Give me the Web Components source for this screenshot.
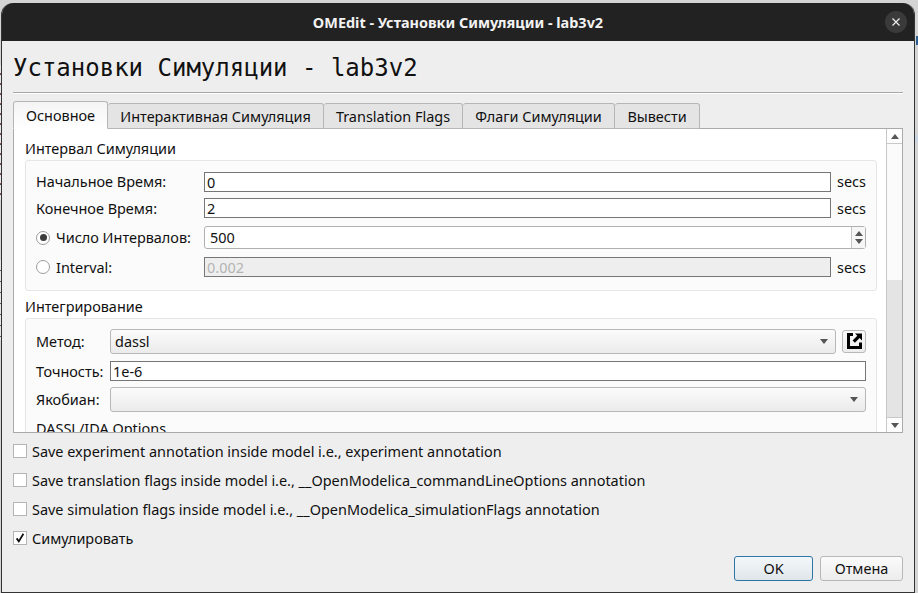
<!DOCTYPE html>
<html>
<head>
<meta charset="utf-8">
<style>
  html, body { margin: 0; height: 100%; }
  body {
    width: 918px; height: 593px; overflow: hidden; box-sizing: border-box;
    padding: 3px 3px 0 1px;
    background:
      repeating-linear-gradient(#e6e6e6 0 8px, #a04a4a 8px 9px, #555 9px 10px) 0 65px / 1px 135px no-repeat,
      repeating-linear-gradient(#e6e6e6 0 10px, #5a5a5a 10px 11px) 0 260px / 1px 80px no-repeat,
      linear-gradient(#2a5f8f, #2a5f8f) 916px 36px / 2px 9px no-repeat,
      linear-gradient(#c9d3e2, #c9d3e2) 915px 135px / 3px 7px no-repeat,
      #d4d4d4;
    font: 14.45px "Noto Sans", sans-serif; color: #101010;
  }
</style>
</head>
<body>
<om-dialog title-text="OMEdit - Установки Симуляции - lab3v2">
  <om-page></om-page>
</om-dialog>

<script>
const css = String.raw`
  :host { box-sizing: border-box; font-family: "Noto Sans", sans-serif; font-size: 14.45px; color: #101010; }
  * { box-sizing: border-box; }
`;

class OmDialog extends HTMLElement {
  constructor() {
    super();
    this.attachShadow({ mode: 'open' });
    this.shadowRoot.innerHTML = String.raw`
      <style>${css}
        :host { display: flex; flex-direction: column; height: 590px; width: 914px;
          background: #eeeeee; border-radius: 12px 12px 0 0; overflow: hidden;
          border-left: 1px solid #333; border-right: 1px solid #333; border-bottom: 1px solid #333; }
        #bar { flex: none; height: 38px; background: #222222; color: #f2f2f2; display: flex;
          align-items: center; justify-content: center; font-weight: 700; font-size: 14.45px; position: relative; }
        #close { position: absolute; right: 7px; top: 8px; width: 22px; height: 22px; border-radius: 50%;
          background: #3a3a3a; display: flex; align-items: center; justify-content: center; }
      </style>
      <div id="bar"><span id="title"></span>
        <div id="close"><svg width="10" height="10" viewBox="0 0 10 10"><path d="M1.5 1.5l7 7M8.5 1.5l-7 7" stroke="#eee" stroke-width="1.2" fill="none"/></svg></div>
      </div>
      <slot></slot>`;
  }
  connectedCallback() {
    this.shadowRoot.getElementById('title').textContent = this.getAttribute('title-text');
  }
}

class OmField extends HTMLElement {
  constructor() {
    super();
    this.attachShadow({ mode: 'open' });
    this.shadowRoot.innerHTML = String.raw`
      <style>${css}
        :host { display: flex; align-items: center; height: 20px; border: 1px solid #767676; background: #fff; padding: 0 6px 0 2px; }
        :host([disabled]) { background: #eeeeee; color: #b4b4b4; }
      </style><slot></slot>`;
  }
}

class OmSpin extends HTMLElement {
  constructor() {
    super();
    this.attachShadow({ mode: 'open' });
    this.shadowRoot.innerHTML = String.raw`
      <style>${css}
        :host { display: flex; align-items: center; height: 23px; border: 1px solid #b0b0b0; border-radius: 3px; background: #fff; padding-left: 5px; }
        #txt { flex: 1; }
        #btns { width: 14px; height: 100%; border-left: 1px solid #c4c4c4; display: flex; flex-direction: column; align-items: center; justify-content: center; gap: 3px; background: #f6f6f6; }
      </style>
      <div id="txt"><slot></slot></div>
      <div id="btns">
        <svg width="8" height="5" viewBox="0 0 8 5"><path d="M4 0l4 5H0z" fill="#555"/></svg>
        <svg width="8" height="5" viewBox="0 0 8 5"><path d="M4 5L0 0h8z" fill="#555"/></svg>
      </div>`;
  }
}

class OmCombo extends HTMLElement {
  constructor() {
    super();
    this.attachShadow({ mode: 'open' });
    this.shadowRoot.innerHTML = String.raw`
      <style>${css}
        :host { display: flex; align-items: center; height: 25px; border: 1px solid #b8b8b8; border-radius: 3px;
          background: linear-gradient(#fbfbfb, #ebebeb); padding: 0 7px 0 4px; }
        #txt { flex: 1; }
      </style>
      <div id="txt"><slot></slot></div>
      <svg width="8" height="5" viewBox="0 0 8 5"><path d="M0 0h8L4 5z" fill="#555"/></svg>`;
  }
}

class OmRadio extends HTMLElement {
  constructor() {
    super();
    this.attachShadow({ mode: 'open' });
    this.shadowRoot.innerHTML = String.raw`
      <style>${css}
        :host { display: flex; align-items: center; gap: 6px; white-space: nowrap; }
        #dot { width: 14px; height: 14px; border-radius: 50%; border: 1px solid #9c9c9c; background: #fff; display: flex; align-items: center; justify-content: center; }
        :host([checked]) #dot::after { content: ""; width: 7px; height: 7px; border-radius: 50%; background: #3c3c3c; }
      </style>
      <div id="dot"></div><slot></slot>`;
  }
}

class OmCheck extends HTMLElement {
  constructor() {
    super();
    this.attachShadow({ mode: 'open' });
    this.shadowRoot.innerHTML = String.raw`
      <style>${css}
        :host { display: flex; align-items: center; gap: 5px; height: 20px; white-space: nowrap; }
        #box { width: 14px; height: 14px; border: 1px solid #b4b4b4; background: #fff; display: flex; }
        svg { display: none; }
        :host([checked]) svg { display: block; }
      </style>
      <div id="box"><svg width="12" height="12" viewBox="0 0 12 12"><path d="M2.6 6.4l2.2 3L9.4 1.8" stroke="#111" stroke-width="1.8" fill="none"/></svg></div>
      <slot></slot>`;
  }
}

class OmButton extends HTMLElement {
  constructor() {
    super();
    this.attachShadow({ mode: 'open' });
    this.shadowRoot.innerHTML = String.raw`
      <style>${css}
        :host { display: flex; align-items: center; justify-content: center; height: 25px; border: 1px solid #b8b8b8; border-radius: 3px;
          background: linear-gradient(#fbfbfb, #ececec); }
        :host([default]) { border-color: #2c75a6; background: linear-gradient(#f3f7fa, #dfe6ea); }
      </style><slot></slot>`;
  }
}

class OmTabs extends HTMLElement {
  constructor() {
    super();
    this.attachShadow({ mode: 'open' });
    this.shadowRoot.innerHTML = String.raw`
      <style>${css}
        :host { display: flex; align-items: flex-end; height: 28px; margin-bottom: -1px; position: relative; z-index: 1; }
        .tab { height: 26px; display: flex; align-items: center; justify-content: center; border: 1px solid #b6b6b6; border-left-width: 0;
          border-radius: 3px 3px 0 0; background: #e4e4e4; white-space: nowrap; }
        .on { height: 28px; background: linear-gradient(#f4f4f4, #fff); border-left-width: 1px; border-bottom-color: #fff; }
      </style>
      <div class="tab on" style="width:95px">Основное</div>
      <div class="tab" style="width:216px">Интерактивная Симуляция</div>
      <div class="tab" style="width:139px">Translation Flags</div>
      <div class="tab" style="width:152px">Флаги Симуляции</div>
      <div class="tab" style="width:85px">Вывести</div>`;
  }
}

class OmScrollbar extends HTMLElement {
  constructor() {
    super();
    this.attachShadow({ mode: 'open' });
    this.shadowRoot.innerHTML = String.raw`
      <style>${css}
        :host { display: flex; flex-direction: column; flex: none; width: 16px; border-left: 1px solid #c8c8c8; background: #fbfbfb; }
        .arrow { flex: none; height: 15px; display: flex; align-items: center; justify-content: center; background: #fdfdfd; }
        .up { border-bottom: 1px solid #c8c8c8; }
        .down { border-top: 1px solid #c8c8c8; }
        #track { flex: 1; display: flex; flex-direction: column; }
        #track::before { content: ""; height: 136px; }
        #thumb { flex: 1; background: #e4e4e4; }
      </style>
      <div class="arrow up"><svg width="8" height="5" viewBox="0 0 8 5"><path d="M4 0l4 5H0z" fill="#555"/></svg></div>
      <div id="track"><div id="thumb"></div></div>
      <div class="arrow down"><svg width="8" height="5" viewBox="0 0 8 5"><path d="M0 0h8L4 5z" fill="#555"/></svg></div>`;
  }
}

class OmGroup extends HTMLElement {
  constructor() {
    super();
    this.attachShadow({ mode: 'open' });
    this.shadowRoot.innerHTML = String.raw`
      <style>${css}
        :host { display: block; flex: none; }
        #cap { display: block; height: 20px; line-height: 22px; }
        #box { margin-top: 2px; border: 1px solid #e6e6e6; border-radius: 3px; background: #fbfbfb; padding: 0 10px; display: grid; align-items: start; }
      </style>
      <div id="cap"></div>
      <div id="box"><slot></slot></div>`;
  }
  connectedCallback() {
    this.shadowRoot.getElementById('cap').textContent = this.getAttribute('caption');
    const box = this.shadowRoot.getElementById('box');
    box.style.gridTemplateColumns = this.getAttribute('cols');
    box.style.gridTemplateRows = this.getAttribute('rows');
    box.style.paddingTop = this.getAttribute('top') + 'px';
    box.style.height = this.getAttribute('h') + 'px';
  }
}

class OmPage extends HTMLElement {
  constructor() {
    super();
    this.attachShadow({ mode: 'open' });
    this.shadowRoot.innerHTML = String.raw`
      <style>${css}
        :host { display: flex; flex-direction: column; flex: 1; min-height: 0; padding: 0 11px; }
        h1 { margin: 0; height: 51px; padding-top: 10px; font: 400 24px/34px "DejaVu Sans Mono", monospace; color: #111; flex: none; white-space: nowrap; }
        hr { flex: none; margin: 0 0 7px; height: 2px; border: 0; border-top: 1px solid #a8a8a8; border-bottom: 1px solid #fff; }
        #panel { flex: none; height: 305px; display: flex; border: 1px solid #aaaaaa; background: #fff; overflow: hidden; }
        #view { flex: 1; min-width: 0; padding: 9px 9px 0 11px; display: flex; flex-direction: column; gap: 5px; overflow: hidden; }
        .full { grid-column: span 2; }
        .lbl { display: flex; align-items: center; white-space: nowrap; height: 20px; }
        .first { height: 19px; }
        .secs { padding-left: 6px; }
        .tall { height: 23px; }
        .combo { height: 25px; }
        #ext { justify-self: end; width: 24px; height: 23px; margin-top: 1px; border: 1px solid #b8b8b8; border-radius: 3px; background: linear-gradient(#fbfbfb,#ececec); display: flex; align-items: center; justify-content: center; }
        #checks { flex: none; padding-top: 8px; display: flex; flex-direction: column; gap: 9px; }
        #btns { flex: none; display: flex; justify-content: flex-end; gap: 7px; padding-top: 8px; }
      </style>
      <h1>Установки Симуляции - lab3v2</h1>
      <hr>
      <om-tabs></om-tabs>
      <div id="panel">
        <div id="view">
          <om-group caption="Интервал Симуляции" cols="168px 627px 1fr" rows="26px 28px 31px 20px" top="11" h="131">
            <div class="lbl first">Начальное Время:</div><om-field>0</om-field><div class="lbl secs first">secs</div>
            <div class="lbl">Конечное Время:</div><om-field>2</om-field><div class="lbl secs">secs</div>
            <om-radio class="tall" checked>Число Интервалов:</om-radio><om-spin class="full">500</om-spin>
            <om-radio class="lbl">Interval:</om-radio><om-field disabled>0.002</om-field><div class="lbl secs">secs</div>
          </om-group>
          <om-group caption="Интегрирование" cols="74px 726px 30px" rows="32px 26px 31px 20px" top="10" h="160">
            <div class="lbl combo">Метод:</div><om-combo>dassl</om-combo>
            <div id="ext"><svg width="18" height="18" viewBox="0 0 18 18"><path d="M8 0H2V16H17V9.5H14V13H5V3H8z" fill="#000"/><path d="M10 .5H17V7.5L14.6 5.1 9.9 9.8 7.6 7.5 12.3 2.8z" fill="#000"/></svg></div>
            <div class="lbl">Точность:</div><om-field class="full">1e-6</om-field>
            <div class="lbl combo">Якобиан:</div><om-combo class="full"></om-combo>
            <div class="lbl" style="grid-column:1/-1">DASSL/IDA Options</div>
          </om-group>
        </div>
        <om-scrollbar></om-scrollbar>
      </div>
      <div id="checks">
        <om-check>Save experiment annotation inside model i.e., experiment annotation</om-check>
        <om-check>Save translation flags inside model i.e., __OpenModelica_commandLineOptions annotation</om-check>
        <om-check>Save simulation flags inside model i.e., __OpenModelica_simulationFlags annotation</om-check>
        <om-check checked>Симулировать</om-check>
      </div>
      <div id="btns">
        <om-button default style="width:79px">OK</om-button>
        <om-button style="width:83px">Отмена</om-button>
      </div>`;
  }
}

customElements.define('om-dialog', OmDialog);
customElements.define('om-field', OmField);
customElements.define('om-spin', OmSpin);
customElements.define('om-combo', OmCombo);
customElements.define('om-radio', OmRadio);
customElements.define('om-check', OmCheck);
customElements.define('om-button', OmButton);
customElements.define('om-tabs', OmTabs);
customElements.define('om-scrollbar', OmScrollbar);
customElements.define('om-group', OmGroup);
customElements.define('om-page', OmPage);
</script>
</body>
</html>
